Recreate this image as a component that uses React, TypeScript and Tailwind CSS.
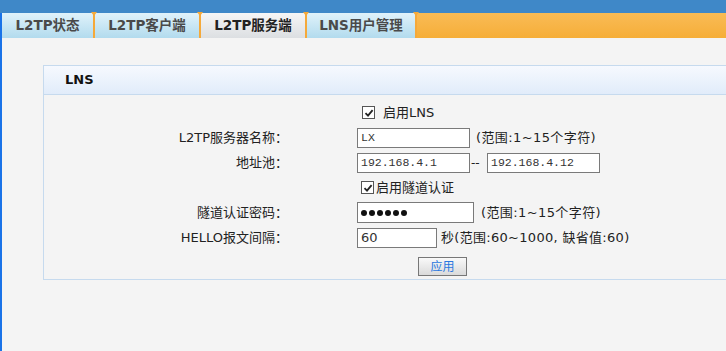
import * as React from "react"

// ==================== SMALL PIECES ====================

const tabs = [
  { label: "L2TP状态", width: "w-[91px]" },
  { label: "L2TP客户端", width: "w-[104px]" },
  { label: "L2TP服务端", width: "w-[104px]", active: true },
  { label: "LNS用户管理", width: "w-[108px]" },
]

const Separator: React.FC = () => (
  <div className="relative w-[2px] h-full bg-[#f5a93a]">
    <div className="absolute -top-[1px] -left-[2px] w-0 h-0 border-l-[3px] border-r-[3px] border-t-[4px] border-l-transparent border-r-transparent border-t-[#f5a93a]" />
  </div>
)

const Checkbox: React.FC = () => (
  <span className="inline-flex items-center justify-center w-[13px] h-[13px] border border-[#555] bg-white">
    <svg viewBox="0 0 10 10" className="w-[10px] h-[10px]">
      <path d="M1.5 5.2 L4 7.6 L8.6 2.2" fill="none" stroke="#222" strokeWidth="1.8" />
    </svg>
  </span>
)

const TextInput: React.FC<{ value: string; width: string; sans?: boolean; height?: string }> = ({
  value,
  width,
  sans,
  height = "h-[20px]",
}) => (
  <div
    className={`${width} ${height} border border-[#7a7a7a] bg-white flex items-center px-[3px] text-[#333] ${
      sans ? "text-[13px]" : "text-[11.5px] font-['Liberation_Mono',monospace]"
    }`}
  >
    {value}
  </div>
)

const Label: React.FC<{ children: React.ReactNode }> = ({ children }) => (
  <div className="text-right text-[13px] text-[#222] whitespace-nowrap">{children}</div>
)

// ==================== APP ====================

const App: React.FC = () => {
  return (
    <div className="w-[726px] h-[351px] overflow-hidden bg-[#f4f4f4] font-['DejaVu_Sans','Noto_Sans_CJK_SC',sans-serif]">
      {/* top bar */}
      <div className="h-[13px] bg-[#3f88c8]" />

      {/* tabs */}
      <div className="flex h-[25px] border-l-2 border-[#1a73e8]">
        {tabs.map((t, i) => (
          <React.Fragment key={t.label}>
            {i > 0 && <Separator />}
            <div
              className={`${t.width} h-full flex items-center justify-center text-[13.5px] font-bold whitespace-nowrap ${
                t.active
                  ? "bg-gradient-to-b from-[#f6f6f6] to-[#dcdfe2] text-[#222]"
                  : "bg-gradient-to-b from-[#e0f2fa] to-[#b2dbee] text-[#4a4a4a]"
              }`}
            >
              {t.label}
            </div>
          </React.Fragment>
        ))}
        <Separator />
        <div className="flex-1 h-full bg-gradient-to-b from-[#f9bb55] to-[#f6ae37]" />
      </div>

      {/* content */}
      <div className="h-[313px] border-l-2 border-[#1a73e8] pl-[41px] pt-[27px]">
        <div className="w-[720px] border border-[#c6daee]">
          {/* panel header */}
          <div className="h-[29px] flex items-center pl-[21px] border-b border-[#c6daee] bg-gradient-to-b from-[#f6f9fe] to-[#e1ecfa] text-[13px] font-bold text-[#111]">
            LNS
          </div>

          {/* panel body */}
          <div className="pt-[5px] pb-[3px]">
            <div className="grid grid-cols-[244px_1fr] gap-x-[69px] auto-rows-[25px] items-center">
              <div />
              <div className="flex items-center gap-[8px] pl-[5px] text-[13px] text-[#222]">
                <Checkbox />
                <span>启用LNS</span>
              </div>

              <Label>L2TP服务器名称：</Label>
              <div className="flex items-center gap-[6px] text-[13px] text-[#222] whitespace-nowrap">
                <TextInput value="LX" width="w-[113px]" />
                <span className="tracking-[0.4px]">(范围:1~15个字符)</span>
              </div>

              <Label>地址池：</Label>
              <div className="flex items-center text-[13px] text-[#222]">
                <TextInput value="192.168.4.1" width="w-[113px]" />
                <span className="w-[17px] pl-[1px] text-[12px]">--</span>
                <TextInput value="192.168.4.12" width="w-[113px]" />
              </div>

              <div />
              <div className="flex items-center gap-[2px] pl-[4px] text-[13px] text-[#222]">
                <Checkbox />
                <span>启用隧道认证</span>
              </div>

              <Label>隧道认证密码：</Label>
              <div className="flex items-center gap-[7px] text-[13px] text-[#222] whitespace-nowrap">
                <div className="w-[117px] h-[21px] border border-[#7a7a7a] bg-white flex items-center px-[3px] gap-[2px]">
                  {[0, 1, 2, 3, 4, 5].map((d) => (
                    <span key={d} className="w-[6px] h-[6px] rounded-full bg-[#111]" />
                  ))}
                </div>
                <span className="tracking-[0.4px]">(范围:1~15个字符)</span>
              </div>

              <Label>HELLO报文间隔：</Label>
              <div className="flex items-center gap-[4px] text-[13px] text-[#222] whitespace-nowrap">
                <TextInput value="60" width="w-[80px]" sans />
                <span className="tracking-[0.3px]">秒(范围:60~1000, 缺省值:60)</span>
              </div>
            </div>

            <div className="flex mt-[7px] pl-[374px]">
              <button className="w-[49px] h-[19px] border border-[#777] bg-gradient-to-b from-[#f9f9f9] to-[#dadada] text-[12px] text-[#2a78e0] leading-none">
                应用
              </button>
            </div>
          </div>
        </div>
      </div>
    </div>
  )
}

export default App
